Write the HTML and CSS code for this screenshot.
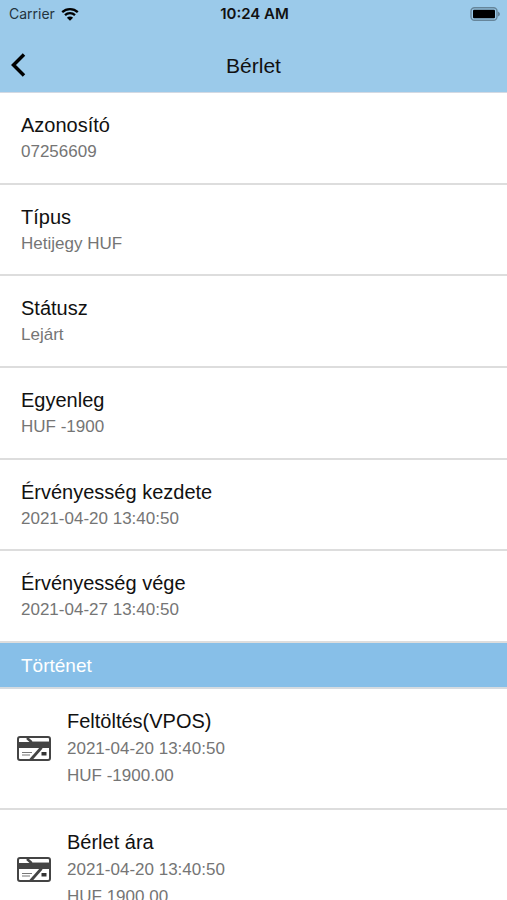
FILE: index.html
```html
<!DOCTYPE html>
<html lang="hu">
<head>
<meta charset="utf-8">
<meta name="viewport" content="width=device-width, initial-scale=1">
<title>Bérlet</title>
<link rel="stylesheet" href="styles.css">
</head>
<body>
<svg class="defs" aria-hidden="true">
  <symbol id="card" viewBox="0 0 34 25">
    <rect x="1" y="1" width="32" height="23" rx="2" fill="#fff" stroke="#444" stroke-width="2"/>
    <path d="M1 6h32v6H1z" fill="#444"/>
    <path d="M10 2l5 4.500" stroke="#444" stroke-width="2.500"/>
    <path d="M16 5.500h16" stroke="#aaa" stroke-width="1"/>
    <path d="M24.500 11.500L13.500 24" stroke="#444" stroke-width="2.800"/>
    <path d="M5 16.500h10M5 19h8" stroke="#777" stroke-width="1.200"/>
    <path d="M24.500 16h5v3.500h-5z" fill="#333"/>
  </symbol>
</svg>
<header class="top">
  <div class="status">
    <div class="carrier">
      <span>Carrier</span>
      <svg class="wifi" viewBox="0 0 18 14" aria-hidden="true">
        <path d="M1.200 5.200a11.200 11.200 0 0 1 15.600 0M4 8.200a7.200 7.200 0 0 1 10 0" fill="none" stroke="#000" stroke-width="2.300"/>
        <path d="M9 13.800L5.900 10.700a4.400 4.400 0 0 1 6.200 0z"/>
      </svg>
    </div>
    <time class="clock">10:24 AM</time>
    <svg class="battery" viewBox="0 0 30 14" aria-hidden="true">
      <rect x="1" y=".8" width="26" height="12.400" rx="3.500" fill="none" stroke="#66859a" stroke-width="1.400"/>
      <rect x="3" y="2.700" width="22" height="8.600" rx="1"/>
      <path d="M28 4.500v5q2-1 2-2.500t-2-2.500z" fill="#66859a"/>
    </svg>
  </div>
  <nav class="bar">
    <button class="back" type="button" aria-label="Vissza">
      <svg viewBox="0 0 16 24" aria-hidden="true"><path d="M14 1.500L3.500 12 14 22.500" fill="none" stroke="#000" stroke-width="3.500"/></svg>
    </button>
    <h1>Bérlet</h1>
  </nav>
</header>
<main>
  <dl class="details">
    <div class="row"><dt>Azonosító</dt><dd>07256609</dd></div>
    <div class="row"><dt>Típus</dt><dd>Hetijegy HUF</dd></div>
    <div class="row"><dt>Státusz</dt><dd>Lejárt</dd></div>
    <div class="row"><dt>Egyenleg</dt><dd>HUF -1900</dd></div>
    <div class="row"><dt>Érvényesség kezdete</dt><dd>2021-04-20 13:40:50</dd></div>
    <div class="row"><dt>Érvényesség vége</dt><dd>2021-04-27 13:40:50</dd></div>
  </dl>
  <h2>Történet</h2>
  <ul class="history">
    <li>
      <svg class="card" aria-hidden="true"><use href="#card"/></svg>
      <div><h3>Feltöltés(VPOS)</h3><p>2021-04-20 13:40:50</p><p>HUF -1900.00</p></div>
    </li>
    <li>
      <svg class="card" aria-hidden="true"><use href="#card"/></svg>
      <div><h3>Bérlet ára</h3><p>2021-04-20 13:40:50</p><p>HUF 1900.00</p></div>
    </li>
  </ul>
</main>
</body>
</html>
```
FILE: styles.css
```css
* { box-sizing: border-box; margin: 0; padding: 0; }
html, body { height: 100%; }
body {
  display: flex;
  flex-direction: column;
  overflow: hidden;
  background: #fff;
  color: #111;
  font: 17px/27px "Liberation Sans", Arial, sans-serif;
}
.defs { position: absolute; width: 0; height: 0; }
.top {
  flex: none;
  background: #9bcaea;
  border-bottom: 1px solid #d3d9e3;
}
.status {
  display: grid;
  grid-template-columns: 1fr auto 1fr;
  align-items: center;
  height: 28px;
  padding: 0 7px 0 9px;
  font: 14px/28px Inter, sans-serif;
}
.carrier { display: flex; align-items: center; gap: 6px; color: #243440; }
.wifi { width: 18px; height: 14px; }
.clock { font-size: 15px; font-weight: 600; }
.battery { width: 30px; height: 14px; justify-self: end; }
.bar {
  display: grid;
  grid-template-columns: 40px 1fr 40px;
  align-items: center;
  height: 64px;
  padding-top: 10px;
}
.back {
  display: flex;
  align-items: center;
  height: 40px;
  padding-left: 10px;
  border: 0;
  background: none;
}
.back svg { width: 16px; height: 24px; }
h1 { text-align: center; font-size: 21px; font-weight: 400; }
main { flex: 1; min-height: 0; overflow: hidden; }
.details {
  display: grid;
  grid-auto-rows: 1fr;
  min-height: 550px;
}
.row {
  padding: 20px 21px 0;
  border-bottom: 2px solid #ddd;
}
dt, h3 { font-size: 20px; font-weight: 400; }
dt { line-height: 25px; }
h3 { line-height: 27px; }
dd, p { color: #757575; }
h2 {
  padding: 2px 21px 0;
  border-bottom: 2px solid #d5dbe0;
  background: #87bfe8;
  color: #fff;
  font-size: 19px;
  font-weight: 400;
  line-height: 42px;
}
.history { list-style: none; }
.history li {
  display: flex;
  align-items: center;
  gap: 16px;
  padding: 19px 17px;
  border-bottom: 2px solid #ddd;
}
.card { flex: none; width: 34px; height: 25px; }
```
